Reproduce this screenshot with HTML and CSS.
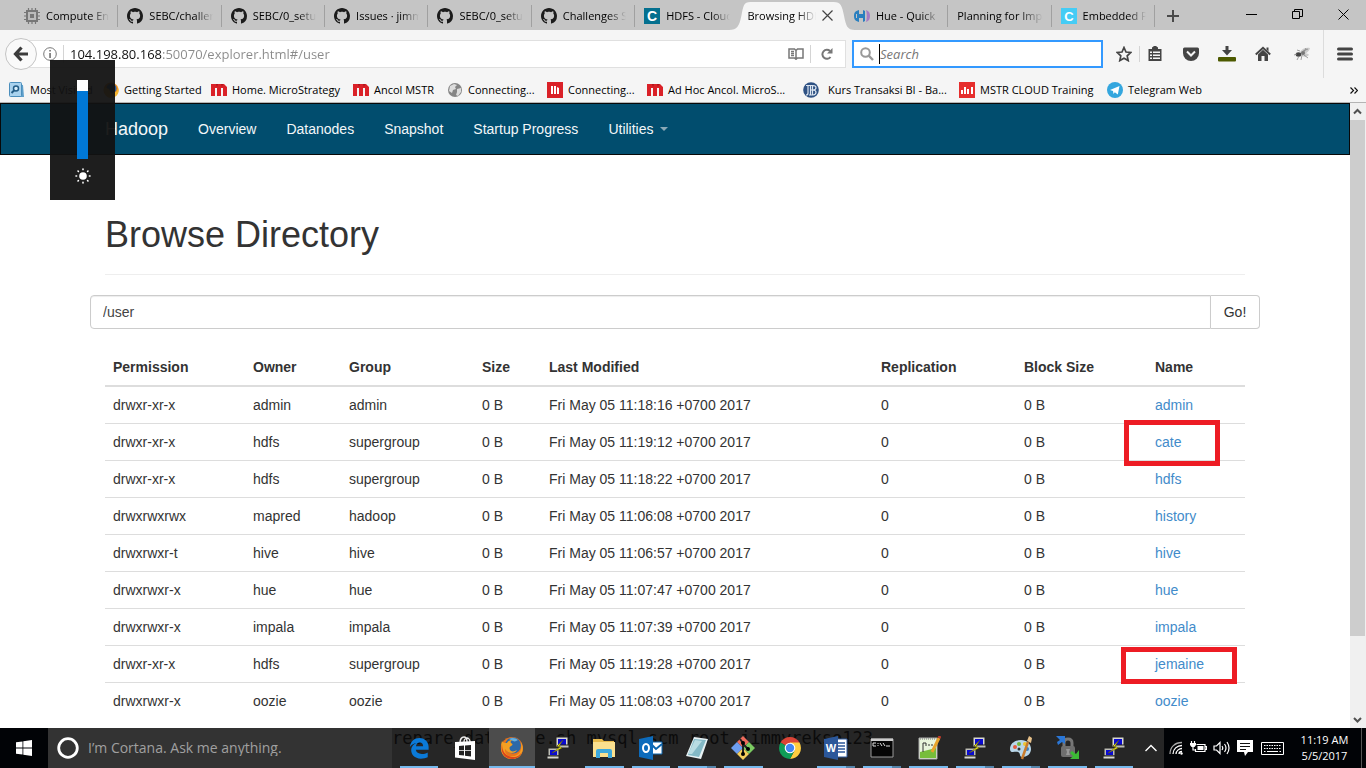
FILE: index.html
```html
<!DOCTYPE html>
<html lang="en">
<head>
<meta charset="utf-8">
<title>Browsing HDFS</title>
<link rel="stylesheet" href="styles.css">
</head>
<body>
<svg class="defs" aria-hidden="true">
  <symbol id="github" viewBox="0 0 16 16"><path fill="#1b1b1b" d="M8 0C3.58 0 0 3.58 0 8c0 3.54 2.29 6.53 5.47 7.59.4.07.55-.17.55-.38 0-.19-.01-.82-.01-1.49-2.01.37-2.53-.49-2.69-.94-.09-.23-.48-.94-.82-1.13-.28-.15-.68-.52-.01-.53.63-.01 1.08.58 1.23.82.72 1.21 1.87.87 2.33.66.07-.52.28-.87.51-1.07-1.78-.2-3.64-.89-3.64-3.95 0-.87.31-1.59.82-2.15-.08-.2-.36-1.02.08-2.12 0 0 .67-.21 2.2.82.64-.18 1.32-.27 2-.27.68 0 1.36.09 2 .27 1.53-1.04 2.2-.82 2.2-.82.44 1.1.16 1.92.08 2.12.51.56.82 1.27.82 2.15 0 3.07-1.87 3.75-3.65 3.95.29.25.54.73.54 1.48 0 1.07-.01 1.93-.01 2.2 0 .21.15.46.55.38A8.01 8.01 0 0 0 16 8c0-4.42-3.58-8-8-8z"/></symbol>
  <symbol id="mstr" viewBox="0 0 16 16"><path fill="#da2128" d="M0 2h13l3 3v9h-4V6h-2v8H6V6H4v8H0z"/><path fill="#a8161c" d="M5 2h2l-1 3zM10 2h2l-1 3z"/></symbol>
  <symbol id="putty" viewBox="0 0 24 24"><path fill="#d8d8d0" stroke="#222" d="M10 1h12v10H10z"/><path fill="#0a0ad0" d="M12 3h8v6h-8z"/><path fill="#bdbdb5" stroke="#222" d="M12 9h11v3H12zM2 12h11v8H2z"/><path fill="#0a0ad0" d="M4 14h7v5H4z"/><path fill="#d8d8d0" stroke="#222" d="M1 20h12v3H1z"/><path fill="#f5ee1c" stroke="#5a5600" stroke-width=".5" d="M17 4l-6 6 3 1-8 6 10-5-3-2z"/></symbol>
</svg>

<header class="browser">
  <div class="tabstrip">
    <nav class="tabs" aria-label="Open tabs">
      <a class="tab" href="#"><svg class="i16" viewBox="0 0 16 16"><path stroke="#777" stroke-width="1.2" d="M4.500 0v16M8 0v16M11.500 0v16M0 4.500h16M0 8h16M0 11.500h16"/><path fill="#777" d="M2 2h12v12H2z"/><path fill="#bbb" d="M4 4h8v8H4z"/><path fill="#777" d="M6 6h4v4H6z"/></svg><span class="label">Compute Engine</span></a>
      <a class="tab" href="#"><svg class="i16"><use href="#github"/></svg><span class="label">SEBC/challenges</span></a>
      <a class="tab" href="#"><svg class="i16"><use href="#github"/></svg><span class="label">SEBC/0_setup.md</span></a>
      <a class="tab" href="#"><svg class="i16"><use href="#github"/></svg><span class="label">Issues · jimmyrekso</span></a>
      <a class="tab" href="#"><svg class="i16"><use href="#github"/></svg><span class="label">SEBC/0_setup.md</span></a>
      <a class="tab" href="#"><svg class="i16"><use href="#github"/></svg><span class="label">Challenges SEBC</span></a>
      <a class="tab plain" href="#"><svg class="i16" viewBox="0 0 16 16"><path fill="#04708f" d="M0 0h16v16H0z"/><text class="mark" x="8" y="13" font-size="14">C</text></svg><span class="label">HDFS - Cloudera</span></a>
      <div class="tab plain active"><svg class="shape" viewBox="0 0 123 28" preserveAspectRatio="none"><path fill="#f5f5f5" d="M0 28C8 28 10 24 12 14S14 0 21 0h81c7 0 8 4 10 14s3 14 11 14z"/></svg><a class="label" href="#">Browsing HDFS</a><button class="close" aria-label="Close tab"><svg viewBox="0 0 11 11" width="11" height="11"><path stroke="#444" stroke-width="1.200" d="M.5.5l10 10M10.500.5l-10 10"/></svg></button></div>
      <a class="tab" href="#"><svg class="i16" viewBox="0 0 16 16"><path fill="#2a7fbf" d="M5 2v12C1 13 0 11 0 8s1-5 5-6zM5 6h4V2l2 1v10l-2 1v-4H5z"/><path fill="#c5c5c5" d="M2 6h1v4H2z"/><path fill="#a77bc4" d="M12 2c3 1 4 3 4 6s-1 5-4 6c1-3 1-9 0-12z"/></svg><span class="label">Hue - Quick Start</span></a>
      <a class="tab" href="#"><span class="label">Planning for Impala</span></a>
      <a class="tab" href="#"><svg class="i16" viewBox="0 0 16 16"><path fill="#45ccf5" d="M0 0h16v16H0z"/><text class="mark" x="8" y="13" font-size="13">C</text></svg><span class="label">Embedded Pages</span></a>
    </nav>
    <button class="newtab" aria-label="New tab"><svg viewBox="0 0 12 12" width="12" height="12"><path stroke="#4a4a4a" stroke-width="2" d="M6 0v12M0 6h12"/></svg></button>
    <div class="winbtns">
      <button aria-label="Minimize"><svg viewBox="0 0 11 11" width="11" height="11"><path stroke="#000" d="M0 5.500h11"/></svg></button>
      <button aria-label="Restore"><svg viewBox="0 0 11 11" width="11" height="11"><path fill="none" stroke="#000" d="M.5 2.500h7v7h-7zM2.500 2.500v-2h8v7h-3"/></svg></button>
      <button aria-label="Close window"><svg viewBox="0 0 11 11" width="11" height="11"><path stroke="#000" d="M.5.5l10 10M10.500.5l-10 10"/></svg></button>
    </div>
  </div>

  <div class="toolbar">
    <button class="back" aria-label="Back"><svg viewBox="0 0 16 16" width="16" height="16"><path fill="none" stroke="#3c3c3c" stroke-width="3.200" d="M8.500 1.500L2.500 8l6 6.500M3 8h12"/></svg></button>
    <div class="urlbar">
      <svg class="i14" viewBox="0 0 14 14"><circle cx="7" cy="7" r="6.300" fill="none" stroke="#777"/><path fill="#666" d="M6.300 3h1.500v1.500H6.300zM6.300 6h1.500v5H6.300z"/></svg>
      <span class="rule"></span>
      <input class="url" type="text" aria-label="Address" value="104.198.80.168:50070/explorer.html#/user">
      <button aria-label="Reader view"><svg viewBox="0 0 16 12" width="16" height="12"><path fill="none" stroke="#777" stroke-width="1.500" d="M8 2.500L6.500 1H1v9h5.500L8 11.300 9.500 10H15V1H9.500zM8 2.500V11M3 3.500h3M3 5.500h3M3 7.500h3"/></svg></button>
      <span class="rule"></span>
      <button class="reload" aria-label="Reload"><svg viewBox="0 0 12 12" width="12" height="12"><path fill="none" stroke="#777" stroke-width="2" d="M9.500 9A4.500 4.500 0 1 1 9 3"/><path fill="#777" d="M11.500 0v5.500H6z"/></svg></button>
    </div>
    <label class="search">
      <svg class="i14" viewBox="0 0 14 14"><circle cx="5.500" cy="5.500" r="4.300" fill="none" stroke="#999" stroke-width="2"/><path stroke="#999" stroke-width="2.400" d="M8.700 8.700L13 13"/></svg>
      <span class="caret"></span>
      <input type="text" placeholder="Search" aria-label="Search">
    </label>
    <div class="tools">
      <button aria-label="Bookmark"><svg class="i16" viewBox="0 0 16 16"><path fill="none" stroke="#444" stroke-width="1.700" d="M8 1.500l2 4.500 4.800.5-3.600 3.300 1 4.800L8 12.200l-4.200 2.400 1-4.800L1.200 6.500 6 6z"/></svg></button>
      <span class="rule"></span>
      <button aria-label="Bookmark list"><svg class="i16" viewBox="0 0 16 16"><path fill="#444" d="M5 3V1.500L7 0h2l2 1.500V3h3.500v12h-13V3z"/><path fill="#f5f5f5" d="M3 5.500h2V7H3zM6 5.500h7V7H6zM3 8.500h2V10H3zM6 8.500h7V10H6zM3 11.500h2V13H3zM6 11.500h7V13H6z"/></svg></button>
      <button aria-label="Pocket"><svg class="i16" viewBox="0 0 16 16"><path fill="#444" d="M1.500 1.500h13Q16 1.500 16 3v4a8 8 0 0 1-16 0V3q0-1.500 1.500-1.500z"/><path fill="none" stroke="#f5f5f5" stroke-width="2" d="M4 5.500l4 4 4-4"/></svg></button>
      <button aria-label="Downloads"><svg viewBox="0 0 18 16" width="18" height="16"><path fill="#444" d="M7.500 0h3v4H14L9 9.500 4 4h3.500z"/><rect y="11" width="18" height="4.500" rx="1" fill="#4d5a00"/></svg></button>
      <button aria-label="Home"><svg class="i16" viewBox="0 0 16 16"><path fill="none" stroke="#444" stroke-width="2" d="M.8 8.500L8 1.800l7.200 6.700"/><path fill="#444" d="M3 8.500l5-4.700 5 4.700V15H9.500v-5h-3v5H3zM11.500 1.500h2v4l-2-2z"/></svg></button>
      <button class="fly" aria-label="Firebug"><svg class="i16" viewBox="0 0 16 16"><path fill="#ccc" d="M6 6c2-4 7-5 10-4-1 4-5 6-8 7zM8 9c3-2 6-2 7 0-2 2-5 2-7 1z"/><ellipse cx="4.500" cy="8.500" rx="2.800" ry="2.200" fill="#444"/><circle cx="9" cy="7" r="2" fill="#777"/><path fill="none" stroke="#888" stroke-width=".8" d="M5 10l-2 4M8 9l-1 5M10 9l4 3M3 8L0 9M6 5L3 4M10 6l2-4M9 5l5-2"/></svg></button>
      <button class="menu" aria-label="Menu"><svg class="i16" viewBox="0 0 16 16"><path stroke="#444" stroke-width="3" stroke-linecap="round" d="M1.500 3h13M1.500 8h13M1.500 13h13"/></svg></button>
    </div>
  </div>

  <nav class="bookmarks" aria-label="Bookmarks">
    <a href="#"><svg class="i16" viewBox="0 0 16 16"><path fill="#5d9fcb" d="M4 2l10 1 1 12H3z"/><rect x=".5" y=".5" width="12" height="14" rx="1" fill="#a9d2ee" stroke="#4b8ebc"/><circle cx="7" cy="6.500" r="2.500" fill="#d9effc" stroke="#235c86" stroke-width="1.500"/><path stroke="#235c86" stroke-width="2" d="M5 8.500L2.500 11"/></svg>Most Visited</a>
    <a href="#"><svg class="i16" viewBox="0 0 16 16"><circle cx="8" cy="8" r="7.500" fill="#ef8b1c"/><circle cx="8.500" cy="6.500" r="5" fill="#2b5e9e"/><path fill="#f6b632" d="M1 5l5 2 2 4 5-1c2-2 2-4 1-7 3 5 2 11-4 12.500S1 13 1 5z"/></svg>Getting Started</a>
    <a href="#"><svg class="i16"><use href="#mstr"/></svg>Home. MicroStrategy</a>
    <a href="#"><svg class="i16"><use href="#mstr"/></svg>Ancol MSTR</a>
    <a href="#"><svg class="i16" viewBox="0 0 16 16"><circle cx="8" cy="8" r="7" fill="#858585"/><path fill="#ddd" d="M3 4l4-2 3 1-2 2 1 2-3 1-1 3-3-2zM10 7l4-1v4l-3 4-2-1 1-3z"/></svg>Connecting...</a>
    <a href="#"><svg class="i16" viewBox="0 0 16 16"><path fill="#da2128" d="M0 0h16v16H0z"/><path fill="#fff" d="M4 4h2v8H4zM7 4h2v8H7zM10 5l2 1v6h-2z"/></svg>Connecting...</a>
    <a href="#"><svg class="i16"><use href="#mstr"/></svg>Ad Hoc Ancol. MicroS...</a>
    <a class="wide" href="#"><svg class="i16" viewBox="0 0 16 16"><circle cx="8" cy="8" r="7.800" fill="#2e5183"/><path fill="none" stroke="#dce5f0" stroke-width="1.200" d="M3 3.500h7q3 0 3 2.200T10 8q3 0 3 2.300T10 13H6M5 3.500V11q0 2-2 2M7.500 3.500V13M9.500 4v9M7.500 8H10"/></svg>Kurs Transaksi BI - Ba...</a>
    <a href="#"><svg class="i16" viewBox="0 0 16 16"><path fill="#e62e2d" d="M0 0h16v16H0z"/><path fill="#fff" d="M2 8h2v4H2zM5 5h2v7H5zM8 7h2v5H8zM12 5h2v7h-2z"/></svg>MSTR CLOUD Training</a>
    <a href="#"><svg class="i16" viewBox="0 0 16 16"><circle cx="8" cy="8" r="8" fill="#34a6de"/><path fill="#fff" d="M3 8l9.500-4-1.700 8.500-3-2.200L6.500 12 6 9z"/></svg>Telegram Web</a>
    <button class="more" aria-label="More bookmarks"><svg viewBox="0 0 8 7" width="8" height="7"><path fill="none" stroke="#111" stroke-width="1.200" d="M.5.5l3 3-3 3M4.500.5l3 3-3 3"/></svg></button>
  </nav>
</header>

<div class="viewport">
  <div class="page">
    <nav class="navbar">
      <div class="container bar">
        <a class="brand" href="#">Hadoop</a>
        <a href="#">Overview</a>
        <a href="#">Datanodes</a>
        <a href="#">Snapshot</a>
        <a href="#">Startup Progress</a>
        <a class="dropdown" href="#">Utilities</a>
      </div>
    </nav>
    <main class="container">
      <h1>Browse Directory</h1>
      <form class="path">
        <input type="text" aria-label="Directory" value="/user">
        <button type="button">Go!</button>
      </form>
      <div class="listing">
        <table>
          <colgroup><col class="c-perm"><col class="c-owner"><col class="c-group"><col class="c-size"><col class="c-date"><col class="c-rep"><col class="c-block"><col class="c-name"></colgroup>
          <thead><tr><th>Permission</th><th>Owner</th><th>Group</th><th>Size</th><th>Last Modified</th><th>Replication</th><th>Block Size</th><th>Name</th></tr></thead>
          <tbody>
            <tr><td>drwxr-xr-x</td><td>admin</td><td>admin</td><td>0 B</td><td>Fri May 05 11:18:16 +0700 2017</td><td>0</td><td>0 B</td><td><a href="#">admin</a></td></tr>
            <tr><td>drwxr-xr-x</td><td>hdfs</td><td>supergroup</td><td>0 B</td><td>Fri May 05 11:19:12 +0700 2017</td><td>0</td><td>0 B</td><td class="marked"><a href="#">cate</a><span class="box box-cate"></span></td></tr>
            <tr><td>drwxr-xr-x</td><td>hdfs</td><td>supergroup</td><td>0 B</td><td>Fri May 05 11:18:22 +0700 2017</td><td>0</td><td>0 B</td><td><a href="#">hdfs</a></td></tr>
            <tr><td>drwxrwxrwx</td><td>mapred</td><td>hadoop</td><td>0 B</td><td>Fri May 05 11:06:08 +0700 2017</td><td>0</td><td>0 B</td><td><a href="#">history</a></td></tr>
            <tr><td>drwxrwxr-t</td><td>hive</td><td>hive</td><td>0 B</td><td>Fri May 05 11:06:57 +0700 2017</td><td>0</td><td>0 B</td><td><a href="#">hive</a></td></tr>
            <tr><td>drwxrwxr-x</td><td>hue</td><td>hue</td><td>0 B</td><td>Fri May 05 11:07:47 +0700 2017</td><td>0</td><td>0 B</td><td><a href="#">hue</a></td></tr>
            <tr><td>drwxrwxr-x</td><td>impala</td><td>impala</td><td>0 B</td><td>Fri May 05 11:07:39 +0700 2017</td><td>0</td><td>0 B</td><td><a href="#">impala</a></td></tr>
            <tr><td>drwxr-xr-x</td><td>hdfs</td><td>supergroup</td><td>0 B</td><td>Fri May 05 11:19:28 +0700 2017</td><td>0</td><td>0 B</td><td class="marked"><a href="#">jemaine</a><span class="box box-jemaine"></span></td></tr>
            <tr><td>drwxrwxr-x</td><td>oozie</td><td>oozie</td><td>0 B</td><td>Fri May 05 11:08:03 +0700 2017</td><td>0</td><td>0 B</td><td><a href="#">oozie</a></td></tr>
          </tbody>
        </table>
      </div>
    </main>
  </div>
  <div class="scrollbar">
    <svg viewBox="0 0 15 17" width="15" height="17"><path fill="none" stroke="#505050" stroke-width="2" d="M4 10.500L7.500 7l3.500 3.500"/></svg>
    <span class="thumb"></span><span class="track"></span>
    <svg viewBox="0 0 15 17" width="15" height="17"><path fill="none" stroke="#505050" stroke-width="2" d="M4 7l3.500 3.500L11 7"/></svg>
  </div>
</div>

<div class="brightness">
  <input type="range" min="0" max="100" value="100" aria-label="Brightness">
  <svg viewBox="0 0 16 16" width="16" height="16"><circle cx="8" cy="8" r="3.800" fill="#fff"/><path stroke="#fff" stroke-width="1.600" stroke-linecap="round" d="M8 1v.6M8 14.400v.6M1 8h.6M14.400 8h.6M3 3l.4.4M12.600 12.600l.4.4M3 13l.4-.4M12.600 3.400L13 3"/></svg>
</div>

<footer class="taskbar">
  <button class="start" aria-label="Start"><svg class="i16" viewBox="0 0 16 16"><path fill="#fff" d="M0 2.300l6.500-.9v6.200H0zM7.300 1.300L16 0v7.600H7.300zM0 8.400h6.500v6.200L0 13.700zM7.300 8.400H16V16l-8.700-1.200z"/></svg></button>
  <label class="cortana"><svg viewBox="0 0 22 22" width="22" height="22"><circle cx="11" cy="11" r="9.300" fill="none" stroke="#fff" stroke-width="2.800"/></svg><input type="text" placeholder="I’m Cortana. Ask me anything." aria-label="Ask Cortana"></label>
  <div class="apps">
    <span class="behind">repare_database.sh mysql scm root jimmyrekso123</span>
    <button class="open" aria-label="Edge"><svg class="i22" viewBox="0 0 24 24"><path fill="#0b7ad8" d="M2 11C3 4 7 1 12.500 1 19 1 22.500 6 22.500 11v3H8.500c.3 3 3 4.500 6.500 4.500 2.500 0 4.500-.6 6.500-1.700V22c-2 1-4.500 1.600-7.500 1.600C7 23.600 3.500 19 3.500 14.500 3.500 10.500 6 7.500 9.500 6.500c-3 .3-6 2-7.500 4.500zm6.700-.8h7.800c0-2.600-1.300-4.200-3.700-4.200-2.200 0-3.800 1.800-4.100 4.200z"/></svg></button>
    <button aria-label="Store"><svg class="i24" viewBox="0 0 24 24"><path fill="none" stroke="#eee" stroke-width="1.400" d="M7 7c0-4 2-6 4-6s3 2 3 5M11 6c0-3 2-4 3-4s3 1 3 4"/><path fill="#fff" d="M2 6l20-1v19L2 21.500z"/><path fill="#222" d="M6 10l5-.4v4.600H6zM12 9.500l6-.5v5.200h-6zM6 15h5v4.600L6 19zM12 15h6v5.400l-6-.7z"/></svg></button>
    <button class="open current" aria-label="Firefox"><svg class="i24" viewBox="0 0 24 24"><circle cx="12" cy="12" r="11" fill="#e8741b"/><circle cx="13" cy="9.500" r="8" fill="#2d69a8"/><path fill="#66b0df" d="M9 3c3-2 7-1 9 1-2 1-3 2-5 1z"/><path fill="#f4a023" d="M2 5c1 2 3 2 5 2 1-2 3-3 5-3-1 1-2 2-1 3 2 1 2 2 0 3-2 1-2 3 0 5 2 1 4 0 6-1-2 4-9 4-12-1-1 7 7 9 12 6 4-2 5-7 4-13 4 8 1 17-9 17S-1 14 2 5z"/><path fill="#d9451d" d="M2 8c0 9 5 13 12 13 3 0 6-2 8-5-2 5-6 7-10 7C5 23 0 17 2 8z"/></svg></button>
    <button aria-label="PuTTY"><svg class="i24"><use href="#putty"/></svg></button>
    <button class="open" aria-label="File Explorer"><svg class="i24" viewBox="0 0 24 24"><path fill="#e8bb4c" d="M1 3h9l2 2h10v3H1z"/><path fill="#fbe08e" d="M1 6h22v15H1z"/><path fill="#3ea9dc" d="M4 22v-7q0-2 2-2h12q2 0 2 2v7h-4v-5H8v5z"/></svg></button>
    <button class="open" aria-label="Outlook"><svg class="i24" viewBox="0 0 24 24"><path fill="#fff" stroke="#0a64ad" d="M12 6h11v12H12z"/><path fill="none" stroke="#0a64ad" stroke-width="2" d="M13 9l4 4 6-5"/><path fill="#0d6bbb" d="M0 3l14-3v24L0 21z"/><ellipse cx="7" cy="12" rx="3" ry="4" fill="none" stroke="#fff" stroke-width="2"/></svg></button>
    <button class="open multi" aria-label="Notepad"><svg class="i24" viewBox="0 0 24 24"><path fill="#e8f2f4" d="M9 1l14 2-7 20L1 20z"/><path fill="#83b9c6" d="M9 3l12 1-7 17-11-2z"/><path fill="#b9dce2" d="M10 4l7 1L7 18l-4 0z"/></svg></button>
    <button class="open" aria-label="Git Bash"><svg class="i24" viewBox="0 0 24 24"><path fill="#ee6b5c" d="M12 0l6 6-6 6-6-6z"/><path fill="#6d9df0" d="M6 6l6 6-6 6-6-6z"/><path fill="#7bcb61" d="M18 6l6 6-6 6-6-6z"/><path fill="#f6ce5b" d="M12 12l6 6-6 6-6-6z"/><path fill="none" stroke="#222" stroke-width="2" d="M9 3l3 4v11M12 8l5 5"/><circle cx="12" cy="7" r="2"/><circle cx="17" cy="13" r="2"/><circle cx="12" cy="18" r="2"/></svg></button>
    <button aria-label="Chrome"><svg class="i24" viewBox="0 0 24 24"><path fill="#db4437" d="M12 12L2.500 6.500a11 11 0 0 1 19 0z"/><path fill="#0f9d58" d="M12 12v11A11 11 0 0 1 2.500 6.500z"/><path fill="#ffcd40" d="M12 12V6.500h9.500A11 11 0 0 1 12 23l4.500-8.500z"/><path fill="#0f9d58" d="M7.500 14.500L12 12l4.500 2.500L12 23z"/><circle cx="12" cy="12" r="5.300" fill="#fff"/><circle cx="12" cy="12" r="4.200" fill="#4285f4"/></svg></button>
    <button class="open multi" aria-label="Word"><svg class="i24" viewBox="0 0 24 24"><path fill="#fff" stroke="#2b579a" d="M12 3h11v18H12z"/><path stroke="#2b579a" stroke-width="1.400" d="M14 7h7M14 10h7M14 13h7M14 16h7"/><path fill="#2b579a" d="M0 3l14-3v24L0 21z"/><text class="mark" x="7" y="16" font-size="11">W</text></svg></button>
    <button class="open multi" aria-label="Command Prompt"><svg class="i24" viewBox="0 0 24 24"><path fill="#050505" stroke="#999" d="M1 3h22v18H1z"/><path fill="#ccc" d="M1 2.500h22V5H1z"/><path fill="none" stroke="#ddd" d="M6 7H3v3h3M8 7v1M8 9v1M10 7l2 3M13 7l2 3M16 10h4"/></svg></button>
    <button class="open" aria-label="Notepad++"><svg class="i24" viewBox="0 0 24 24"><path fill="#e9f5dc" stroke="#aaa" d="M2 2h18v21H2z"/><path fill="#77bd3b" d="M3 16l16-4v10H3z"/><path stroke="#777" stroke-dasharray="1 1" d="M3 3h16"/><path fill="none" stroke="#333" d="M6 7v9M6 7h3v3M11 9h2M14 9h2"/><path stroke="#e9a42b" stroke-width="3" d="M22 2l-7 14"/><path stroke="#c03a2b" stroke-width="3" d="M23 0l-1 2"/></svg></button>
    <button class="open multi" aria-label="PuTTY session"><svg class="i24"><use href="#putty"/></svg></button>
    <button class="open multi" aria-label="Paint"><svg class="i24" viewBox="0 0 24 24"><path fill="#b9d7ea" d="M1 13C1 7 7 4 12 4c6 0 10 4 10 9s-4 8-9 8c-3 0-1-4-4-5S1 18 1 13z"/><circle cx="6" cy="11" r="2" fill="#e45b3e"/><circle cx="10" cy="8" r="2" fill="#74b53c"/><circle cx="16" cy="8" r="2" fill="#f0c330"/><circle cx="10" cy="13" r="1.500" fill="#333"/><circle cx="18" cy="13" r="2" fill="#3c7fc4"/><path stroke="#c77b2d" stroke-width="2.500" d="M19 6l-6 17"/><path fill="#e9c28a" d="M18 5l2-5 3 2-1 5z"/></svg></button>
    <button class="open" aria-label="WinSCP"><svg class="i24" viewBox="0 0 24 24"><path fill="none" stroke="#777" stroke-width="3" d="M8 11V7q0-4 4-4t4 4v4"/><rect x="5" y="10" width="14" height="11" rx="2" fill="#6f6f6f"/><path fill="#999" d="M10 13h4l-1 3 1 3h-4l1-3z"/><path fill="#2a76d6" d="M0 0h9v8L6 6l-4 3-1-3 3-2z"/><path fill="#3cbb35" d="M23 14v9h-9l3-3-3-3 2-2 4 3z"/></svg></button>
    <button class="open" aria-label="PuTTY terminal"><svg class="i24"><use href="#putty"/></svg></button>
  </div>
  <div class="tray">
    <button class="shade" aria-label="Hidden icons"><svg viewBox="0 0 12 8" width="12" height="8"><path fill="none" stroke="#fff" stroke-width="1.400" d="M.5 7L6 1.500 11.500 7"/></svg></button>
    <button aria-label="Network"><svg viewBox="0 0 14 14" width="14" height="14"><path fill="none" stroke="#aaa" stroke-width="1.300" d="M1 13C1 6 6 1.500 13 1.500"/><path fill="none" stroke="#fff" stroke-width="1.300" d="M4 13c0-5 4-8.500 9-8.500M7 13c0-3 3-5.500 6-5.500M10 13c0-1.500 1.500-2.500 3-2.500"/><circle cx="12.500" cy="12.500" r="1.200" fill="#fff"/></svg></button>
    <button aria-label="Battery"><svg viewBox="0 0 17 14" width="17" height="14"><path fill="none" stroke="#fff" stroke-width="1.200" d="M6.500 3.500H15v7H5.500V8M15 5.500h1.500v3H15M3 6v3h3M1.500 2.500V0M4.500 2.500V0"/><path fill="#fff" d="M0 2h6v2L4.500 6h-3L0 4zM7.500 5h6v4h-6z"/></svg></button>
    <button aria-label="Volume"><svg viewBox="0 0 17 14" width="17" height="14"><path fill="none" stroke="#fff" stroke-width="1.200" d="M1 5h2.500L7 1.500v11L3.500 9H1zM9 5q1.500 2 0 4M11.500 3q3 4 0 8M14 1q4 6 0 12"/></svg></button>
    <button aria-label="Notifications"><svg viewBox="0 0 16 16" width="16" height="16"><path fill="#fff" d="M0 0h16v12h-5l-3 4-1-4H0z"/><path stroke="#111" d="M3 3.500h10M3 6.500h10M3 9.500h6"/></svg></button>
    <button class="kb" aria-label="Keyboard"><svg viewBox="0 0 23 13" width="23" height="13"><path fill="none" stroke="#fff" d="M.5.5h22v12H.5z"/><path stroke="#fff" stroke-width="1.200" stroke-dasharray="1.500 1" d="M3 3.500h17M3 6.500h17"/><path stroke="#fff" d="M3 9.500h1.500M6 9.500h11M18.500 9.500H20"/></svg></button>
    <button class="clock"><span>11:19 AM</span><span>5/5/2017</span></button>
    <span class="peek"></span>
  </div>
</footer>
</body>
</html>
```

FILE: styles.css
```css
* { box-sizing: border-box; }

body {
  margin: 0;
  height: 100vh;
  display: flex;
  flex-direction: column;
  overflow: hidden;
  background: #fff;
  font: 11px/16px "Open Sans", "Noto Sans", sans-serif;
  color: #000;
}

a { color: inherit; text-decoration: none; }
svg { display: block; flex: none; }
button {
  display: flex;
  align-items: center;
  justify-content: center;
  padding: 0;
  border: 0;
  background: none;
  font: inherit;
  color: inherit;
}
input { font: inherit; min-width: 0; outline: none; }

.defs { position: absolute; width: 0; height: 0; }
.i14 { width: 14px; height: 14px; }
.i16 { width: 16px; height: 16px; }
.i22 { width: 22px; height: 22px; }
.i24 { width: 24px; height: 24px; }
.mark { font-family: "Liberation Sans", sans-serif; font-weight: bold; fill: #fff; text-anchor: middle; }

/* Browser window */
.browser { background: #f5f5f5; border-bottom: 1px solid #b4b4b4; }

.tabstrip { display: flex; height: 30px; background: #c5c5c5; }
.tabs { display: flex; flex: 0 1 1155px; min-width: 0; padding-left: 15px; }
.tab {
  position: relative;
  display: flex;
  flex: 1 1 0;
  min-width: 0;
  align-items: center;
  gap: 6px;
  padding: 1px 9px 0;
}
.tab::after {
  content: "";
  position: absolute;
  right: 0;
  top: 5px;
  bottom: 3px;
  width: 1px;
  background: #a0a0a0;
}
.tab.plain::after { display: none; }
.label {
  position: relative;
  flex: 1 1 0;
  overflow: hidden;
  white-space: nowrap;
  -webkit-mask-image: linear-gradient(90deg, #000 72%, transparent);
  mask-image: linear-gradient(90deg, #000 72%, transparent);
}
.shape { position: absolute; left: -10px; top: 2px; width: calc(100% + 20px); height: 28px; }
.active { z-index: 1; padding-right: 12px; }
.close { position: relative; }
.newtab { width: 36px; padding-top: 2px; }
.winbtns { display: flex; margin-left: auto; }
.winbtns button { width: 46px; height: 28px; }

.toolbar { display: flex; height: 48px; align-items: center; padding-left: 5px; }
.back {
  position: relative;
  z-index: 1;
  width: 32px;
  height: 32px;
  border: 1px solid #c4c4c4;
  border-radius: 50%;
  background: #fafafa;
}
.rule { width: 1px; height: 18px; background: #d4d4d4; }
.urlbar {
  display: flex;
  flex: 1 1 0;
  align-items: center;
  height: 28px;
  margin-left: -8px;
  padding: 0 12px 0 13px;
  gap: 6px;
  background: #fff;
  border: 1px solid #e0e0e0;
}
.url {
  flex: 1 1 0;
  padding: 0;
  border: 0;
  font-size: 13px;
  color: transparent;
  background: linear-gradient(90deg, #111 92px, #8a8a8a 92px);
  -webkit-background-clip: text;
  background-clip: text;
}
.reload { margin-left: 4px; }
.search {
  display: flex;
  align-items: center;
  width: 251px;
  height: 28px;
  margin-left: 6px;
  padding-left: 6px;
  background: #fff;
  border: 2px solid #3399ff;
}
.caret { width: 1px; height: 20px; margin-left: 5px; background: #000; }
.search input { flex: 1 1 0; padding: 0; border: 0; background: none; font-size: 13px; font-style: italic; }
.search input::placeholder { color: #777; opacity: 1; }
.tools { display: flex; align-self: stretch; align-items: center; padding-left: 6px; }
.tools button { width: 36px; }
.tools button:first-child { width: 30px; }
.tools .rule + button { width: 30px; margin-right: 3px; }
.tools .rule { height: 16px; }
.tools .fly { width: 42px; }
.tools .menu { align-self: stretch; width: 43px; border-left: 1px solid #dcdcdc; }

.bookmarks {
  display: grid;
  grid-template-columns: 94px 108px 142px 94px 100px 100px 156px 156px 148px 1fr 24px;
  align-items: center;
  height: 24px;
  padding-left: 9px;
  white-space: nowrap;
}
.bookmarks a { display: flex; align-items: center; gap: 5px; }
.bookmarks .wide { gap: 9px; }

/* Hadoop page */
.viewport {
  display: flex;
  flex: 1 1 0;
  min-height: 0;
  font: 14px/20px "Liberation Sans", Arial, sans-serif;
  color: #333;
}
.page { flex: 1 1 0; overflow: hidden; }
.container { max-width: 1170px; margin: 0 auto; }
.navbar { margin-bottom: 60px; background: #014d6e; border: 1px solid #080808; }
.bar { display: flex; }
.bar a { padding: 15px; color: #f3f7f9; }
.bar .brand { font-size: 18px; }
.dropdown { display: flex; align-items: center; gap: 6px; }
.dropdown::after {
  content: "";
  border: 4px solid transparent;
  border-top-color: #8ba9b7;
  border-bottom: 0;
}
h1 {
  margin: 0 15px 20px;
  padding-bottom: 19px;
  border-bottom: 1px solid #eee;
  font-size: 36px;
  line-height: 40px;
  font-weight: 500;
}
.path { display: flex; height: 34px; margin-bottom: 20px; }
.path input {
  flex: 1 1 0;
  padding: 6px 12px;
  border: 1px solid #ccc;
  border-radius: 4px 0 0 4px;
  color: #444;
  box-shadow: inset 0 1px 1px rgba(0, 0, 0, .075);
}
.path button {
  width: 49px;
  border: 1px solid #ccc;
  border-left: 0;
  border-radius: 0 4px 4px 0;
  background: #fff;
}
.listing { padding: 0 15px; }
table { width: 100%; table-layout: fixed; border-collapse: separate; border-spacing: 0; }
th, td { padding: 8px; text-align: left; white-space: nowrap; }
th { border-bottom: 2px solid #ddd; }
td { border-bottom: 1px solid #ddd; }
tbody tr:last-child td { border-bottom: 0; }
td a { color: #428bca; }
.c-perm { width: 140px; }
.c-owner { width: 96px; }
.c-group { width: 133px; }
.c-size { width: 67px; }
.c-date { width: 332px; }
.c-rep { width: 143px; }
.c-block { width: 131px; }
.c-name { width: 98px; }
.marked { position: relative; }
.box { position: absolute; border: 5px solid #ed1c24; }
.box-cate { left: -23px; top: -4px; width: 96px; height: 46px; }
.box-jemaine { left: -26px; top: 1px; width: 116px; height: 37px; }

.scrollbar {
  display: flex;
  flex-direction: column;
  width: 16px;
  padding-right: 1px;
  background: #f0f0f0;
}
.thumb { flex: 516 1 0; background: #cdcdcd; }
.track { flex: 75 1 0; }

/* Brightness flyout */
.brightness {
  position: absolute;
  z-index: 5;
  left: 50px;
  top: 60px;
  display: flex;
  flex-direction: column;
  align-items: center;
  gap: 9px;
  width: 65px;
  height: 140px;
  padding-top: 20px;
  background: rgba(18, 18, 18, .95);
}
.brightness input {
  -webkit-appearance: none;
  appearance: none;
  writing-mode: vertical-lr;
  direction: rtl;
  width: 11px;
  height: 79px;
  margin: 0;
  background: #0078d7;
}
.brightness input::-webkit-slider-thumb {
  -webkit-appearance: none;
  width: 11px;
  height: 11px;
  background: #fff;
}

/* Taskbar */
.taskbar { display: flex; height: 40px; background: #010306; color: #fff; }
.start { width: 48px; }
.cortana { display: flex; flex: 0 0 344px; align-items: center; gap: 9px; padding-left: 9px; background: #333; }
.cortana input { flex: 1 1 0; padding: 0; border: 0; background: none; font-size: 14px; }
.cortana input::placeholder { color: #a0a0a0; opacity: 1; }
.apps { position: relative; display: flex; flex: 1 1 0; padding-left: 4px; background: #262626; }
.apps button { position: relative; flex: 1 1 0; }
.apps .open::after {
  content: "";
  position: absolute;
  left: 4px;
  right: 4px;
  bottom: 0;
  height: 2px;
  background: #76b9ed;
}
.apps .multi::after { background: linear-gradient(90deg, #76b9ed 76%, #5584aa 76%); }
.apps .current { background: #4c4c4c; }
.apps .current::after { left: 0; right: 0; }
.behind {
  position: absolute;
  left: 0;
  top: 0;
  font: 17px/20px "DejaVu Sans Mono", monospace;
  color: #0b0b0b;
  white-space: nowrap;
}
.tray { display: flex; width: 229px; }
.tray button { width: 23px; }
.tray .shade { width: 27px; background: #262626; }
.tray .kb { width: 32px; }
.tray .clock { flex: 1 1 0; flex-direction: column; }
.peek { width: 5px; border-left: 1px solid #555; }
```
